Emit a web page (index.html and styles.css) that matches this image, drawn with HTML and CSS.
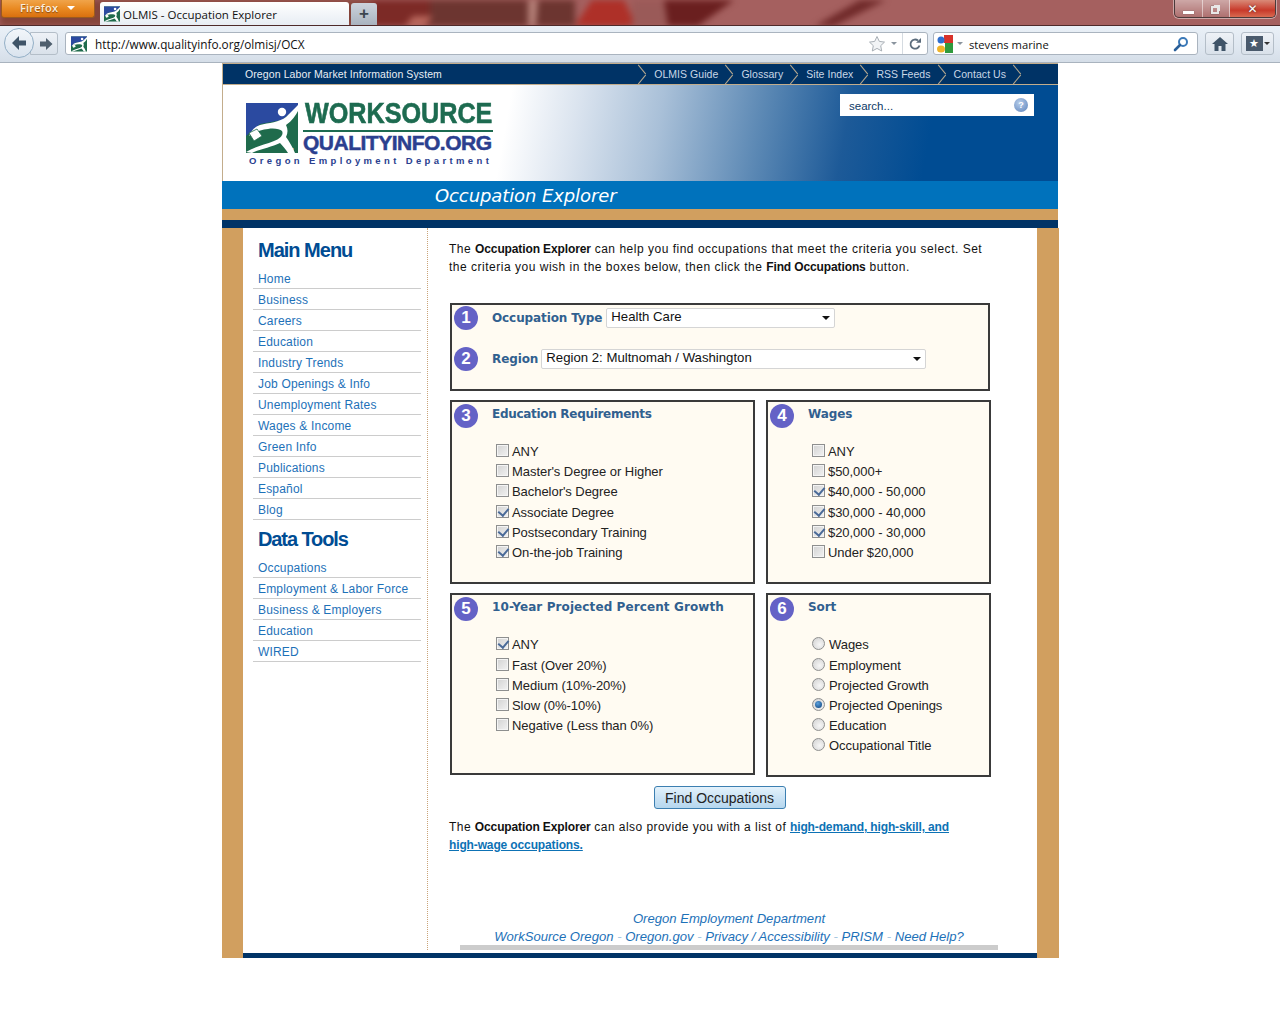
FILE: index.html
```html
<!DOCTYPE html>
<html lang="en">
<head>
<meta charset="utf-8">
<title>OLMIS - Occupation Explorer</title>
<link rel="stylesheet" href="styles.css">
</head>
<body>
<div class="chrome">
  <div class="titlebar">
    <svg class="titleart" viewBox="0 0 1280 26" preserveAspectRatio="none">
      <path d="M0 0h372v26H0z" fill="#84443a"/>
      <path d="M372 0h60v26h-60z" fill="#7c2a26"/>
      <path d="M430 0h145v26H430z" fill="#6c3530"/>
      <path d="M528 0h10l-2 26h-8z" fill="#b58078"/>
      <path d="M575 26 592 0h32l12 26z" fill="#ae3028"/>
      <path d="M632 0h50l-14 26h-36z" fill="#9a5a58"/>
      <path d="M664 0h70l-36 26h-30z" fill="#6a1f1f"/>
      <path d="M405 26l8-10h20l-8 10z" fill="#b8675c"/>
      <path d="M815 26l45-26h26l-52 26z" fill="#702a2a"/>
    </svg>
    <div class="ffbtn">Firefox <span class="ffcaret"></span></div>
    <div class="tab">
      <svg class="favicon" viewBox="0 0 52 50"><use href="#mark"/></svg>
      <span>OLMIS - Occupation Explorer</span>
    </div>
    <div class="newtab">+</div>
    <div class="winbtns">
      <div class="wb wbmin"><span class="minbar"></span></div>
      <div class="wb wbmax"><span class="maxbox"></span></div>
      <div class="wb wbclose">✕</div>
    </div>
  </div>
  <div class="toolbar">
    <div class="navbtns">
      <div class="back"><svg viewBox="0 0 18 18" width="18" height="18"><path d="M9 2 2 9l7 7v-4.500h7v-5H9z" fill="#3f5468"/></svg></div>
      <div class="fwd"><svg viewBox="0 0 14 14" width="14" height="14"><path d="M7 1 13.500 7 7 13V9.500H1v-5h6z" fill="#4f5f6e"/></svg></div>
    </div>
    <div class="urlbar">
      <svg class="favicon urlicon" viewBox="0 0 52 50"><use href="#mark"/></svg>
      <span class="urltext">http://www.qualityinfo.org/olmisj/OCX</span>
      <svg class="star" viewBox="0 0 18 18" width="18" height="18"><path d="M9 1.500l2.300 4.900 5.200.7-3.800 3.600 1 5.300L9 13.400 4.300 16l1-5.300-3.800-3.600 5.200-.7z" fill="#f2f4f6" stroke="#a9b0b6"/></svg>
      <span class="tinycaret"></span>
      <span class="urlsep"></span>
      <svg class="reload" viewBox="0 0 14 14" width="14" height="14"><path d="M11.500 8.500A4.600 4.600 0 1 1 10 3.500" fill="none" stroke="#5b6c7c" stroke-width="1.800"/><path d="M8 5.800h5V1z" fill="#5b6c7c"/></svg>
    </div>
    <div class="searchbar">
      <svg class="gicon" viewBox="0 0 16 18" width="16" height="18"><path d="M7 0h9v8H7z" fill="#d8322a"/><path d="M8 8h8v10H8z" fill="#2f9a3d"/><circle cx="4" cy="5" r="3.500" fill="#2f6fd0"/><ellipse cx="4" cy="14" rx="4" ry="3.500" fill="#f0b429"/></svg>
      <span class="tinycaret"></span>
      <span class="searchtext">stevens marine</span>
      <svg class="glass" viewBox="0 0 16 16" width="16" height="16"><circle cx="10" cy="6" r="4" fill="none" stroke="#3b79b8" stroke-width="2"/><path d="M7 9l-5 5" stroke="#2a5f99" stroke-width="2.600" stroke-linecap="round"/></svg>
    </div>
    <div class="toolbtn home"><svg viewBox="0 0 16 14" width="16" height="14"><path d="M8 0 0 7h2.500v7h4V9h3v5h4V7H16z" fill="#3f5468"/></svg></div>
    <div class="toolbtn marks"><span class="markbox">★</span><span class="tinycaret dark"></span></div>
  </div>
</div>

<svg class="defs" width="0" height="0" aria-hidden="true">
  <symbol id="mark" viewBox="0 0 52 50">
    <rect width="52" height="50" fill="#1f6b4c"/>
    <path d="M0 0H52V4L36 17 14 21 0 33Z" fill="#2b4aa0"/>
    <path d="M52 2 40 14C34 19 22 20 14 22 8 24 5 28 3 33 8 29 14 27 22 26 28 25 34 26 36 28 38 32 34 36 28 38 18 42 8 44 0 49L6 50C14 46 26 44 34 40 37 43 40 47 42 50H49C46 43 43 38 40 34 42 30 42 26 40 22 46 18 50 12 52 8Z" fill="#fff"/>
    <circle cx="36" cy="9" r="4.200" fill="#fff"/>
    <path d="M3 30 11 26 16 33 8 38Z" fill="#fff" stroke="#1f6b4c" stroke-width=".8"/>
  </symbol>
</svg>

<div class="page">
  <div class="topnav">
    <div class="sysname">Oregon Labor Market Information System</div>
    <nav class="toplinks">
      <span class="chev"></span><a>OLMIS Guide</a>
      <span class="chev"></span><a>Glossary</a>
      <span class="chev"></span><a>Site Index</a>
      <span class="chev"></span><a>RSS Feeds</a>
      <span class="chev"></span><a>Contact Us</a>
      <span class="chev"></span>
    </nav>
  </div>
  <div class="brand">
    <div class="logo">
      <svg class="logomark" viewBox="0 0 52 50"><use href="#mark"/><text x="41" y="49" class="tm">TM</text></svg>
      <div class="logotext">
        <div class="ws">WORKSOURCE</div>
        <div class="qi">QUALITYINFO.ORG</div>
      </div>
      <div class="oed">Oregon Employment Department</div>
    </div>
    <div class="sitesearch">
      <span>search...</span>
      <span class="helpdot">?</span>
    </div>
  </div>
  <div class="titleband"><span>Occupation Explorer</span></div>
  <div class="tanband"></div>
  <div class="navyband"></div>

  <div class="main">
    <aside class="side">
      <h2>Main Menu</h2>
      <ul class="menu">
        <li>Home</li><li>Business</li><li>Careers</li><li>Education</li><li>Industry Trends</li><li>Job Openings &amp; Info</li><li>Unemployment Rates</li><li>Wages &amp; Income</li><li>Green Info</li><li>Publications</li><li>Español</li><li>Blog</li>
      </ul>
      <h2 class="h2b">Data Tools</h2>
      <ul class="menu">
        <li>Occupations</li><li>Employment &amp; Labor Force</li><li>Business &amp; Employers</li><li>Education</li><li>WIRED</li>
      </ul>
    </aside>
    <section class="content">
      <p class="intro">The <b>Occupation Explorer</b> can help you find occupations that meet the criteria you select. Set<br>the criteria you wish in the boxes below, then click the <b>Find Occupations</b> button.</p>

      <div class="panel wide">
        <div class="selrow r1">
          <span class="num">1</span>
          <span class="head">Occupation Type</span>
          <span class="sel s1">Health Care<i></i></span>
        </div>
        <div class="selrow r2">
          <span class="num">2</span>
          <span class="head">Region</span>
          <span class="sel s2">Region 2: Multnomah / Washington<i></i></span>
        </div>
      </div>

      <div class="pgrid">
        <div class="panel p3">
          <div class="phead"><span class="num">3</span><span class="head">Education Requirements</span></div>
          <div class="opts">
            <div class="opt"><span class="cb"></span>ANY</div>
            <div class="opt"><span class="cb"></span>Master's Degree or Higher</div>
            <div class="opt"><span class="cb"></span>Bachelor's Degree</div>
            <div class="opt"><span class="cb on"></span>Associate Degree</div>
            <div class="opt"><span class="cb on"></span>Postsecondary Training</div>
            <div class="opt"><span class="cb on"></span>On-the-job Training</div>
          </div>
        </div>
        <div class="panel p4">
          <div class="phead"><span class="num">4</span><span class="head">Wages</span></div>
          <div class="opts">
            <div class="opt"><span class="cb"></span>ANY</div>
            <div class="opt"><span class="cb"></span>$50,000+</div>
            <div class="opt"><span class="cb on"></span>$40,000 - 50,000</div>
            <div class="opt"><span class="cb on"></span>$30,000 - 40,000</div>
            <div class="opt"><span class="cb on"></span>$20,000 - 30,000</div>
            <div class="opt"><span class="cb"></span>Under $20,000</div>
          </div>
        </div>
        <div class="panel p5">
          <div class="phead"><span class="num">5</span><span class="head">10-Year Projected Percent Growth</span></div>
          <div class="opts">
            <div class="opt"><span class="cb on"></span>ANY</div>
            <div class="opt"><span class="cb"></span>Fast (Over 20%)</div>
            <div class="opt"><span class="cb"></span>Medium (10%-20%)</div>
            <div class="opt"><span class="cb"></span>Slow (0%-10%)</div>
            <div class="opt"><span class="cb"></span>Negative (Less than 0%)</div>
          </div>
        </div>
        <div class="panel p6">
          <div class="phead"><span class="num">6</span><span class="head">Sort</span></div>
          <div class="opts">
            <div class="opt"><span class="rb"></span>Wages</div>
            <div class="opt"><span class="rb"></span>Employment</div>
            <div class="opt"><span class="rb"></span>Projected Growth</div>
            <div class="opt"><span class="rb on"></span>Projected Openings</div>
            <div class="opt"><span class="rb"></span>Education</div>
            <div class="opt"><span class="rb"></span>Occupational Title</div>
          </div>
        </div>
      </div>

      <div class="findrow"><button class="find" type="button">Find Occupations</button></div>
      <p class="outro">The <b>Occupation Explorer</b> can also provide you with a list of <a>high-demand, high-skill, and<br>high-wage occupations.</a></p>

      <footer class="foot">
        <div>Oregon Employment Department</div>
        <div>WorkSource Oregon <s>-</s> Oregon.gov <s>-</s> Privacy / Accessibility <s>-</s> PRISM <s>-</s> Need Help?</div>
        <div class="greybar"></div>
      </footer>
    </section>
  </div>
  <div class="bottombar"><div class="bottomnavy"></div></div>
</div>
</body>
</html>
```
FILE: styles.css
```css
* { box-sizing: border-box; }
html, body { margin: 0; padding: 0; background: #fff; }
body { font-family: "Liberation Sans", Arial, sans-serif; font-size: 12px; color: #111; height: 1024px; overflow: hidden; }
.defs { position: absolute; }
.tm { font: bold 4.500px "Liberation Sans", sans-serif; fill: #fff; }

.chrome { height: 63px; }
.titlebar { position: relative; height: 26px; background: #a5605f; border-bottom: 1px solid #4e2a2a; display: flex; align-items: flex-start; overflow: hidden; }
.titleart { position: absolute; left: 0; top: 0; width: 100%; height: 26px; filter: blur(3px); }
.ffbtn { position: relative; width: 94px; height: 18px; margin-left: 1px; background: linear-gradient(#f0a44a, #e98a22 50%, #d9700f); border: 1px solid #9a5a20; border-top: 0; border-radius: 0 0 3px 3px; color: #fbeede; font: 600 11px/16px "Open Sans", sans-serif; text-align: left; text-shadow: 0 1px 1px #8a4a10; padding-left: 18px; letter-spacing: .2px; }
.ffcaret { position: absolute; left: 65px; top: 6px; border: 4px solid transparent; border-top: 4px solid #fff; border-bottom: 0; }
.tab { position: relative; width: 249px; height: 24px; margin: 2px 0 0 5px; background: linear-gradient(#fff, #e6ecf3); border-radius: 3px 3px 0 0; display: flex; align-items: center; padding-left: 4px; gap: 3px; font: 11.500px "Open Sans", sans-serif; color: #111; }
.favicon { width: 16px; height: 16px; flex: none; }
.newtab { position: relative; width: 26px; height: 22px; margin: 3px 0 0 2px; background: linear-gradient(#ccd3dc, #a9b3bf); border-radius: 3px 3px 0 0; color: #3c4650; font: bold 17px/22px "Liberation Sans", sans-serif; text-align: center; }
.winbtns { position: absolute; right: 4px; top: 0; width: 102px; height: 18px; display: flex; border: 1px solid #4a3a3a; border-top: 0; border-radius: 0 0 5px 5px; overflow: hidden; box-shadow: 0 0 0 1px rgba(255,255,255,.45); }
.wb { display: flex; align-items: center; justify-content: center; height: 100%; background: linear-gradient(rgba(255,255,255,.45), rgba(255,255,255,.1)); border-right: 1px solid rgba(255,255,255,.5); }
.wbmin { width: 28px; }
.wbmax { width: 27px; }
.wbclose { flex: 1; border: 0; background: linear-gradient(#d98a78, #c8392a 60%, #d96a50); color: #fff; font: bold 12px/1 "DejaVu Sans", sans-serif; text-shadow: 0 0 2px #333; }
.minbar { width: 11px; height: 3px; background: #fff; margin-top: 7px; box-shadow: 0 0 1px #333; }
.maxbox { width: 8px; height: 8px; border: 2px solid #e8e8e8; box-shadow: 2px -2px 0 -1px #e8e8e8, 0 0 1px #333; margin: 2px 2px 0 0; }

.toolbar { height: 37px; background: linear-gradient(#eaf0f7, #dfe7f0 60%, #d5dee8); border-bottom: 1px solid #a9b3be; display: flex; align-items: flex-start; position: relative; }
.navbtns { width: 65px; height: 36px; position: relative; flex: none; }
.back { position: absolute; left: 4px; top: 2px; width: 30px; height: 30px; border-radius: 50%; background: linear-gradient(#f2f6fa, #d9e3ee); border: 1px solid #93afc6; display: flex; align-items: center; justify-content: center; z-index: 1; }
.fwd { position: absolute; left: 30px; top: 6px; width: 28px; height: 23px; background: linear-gradient(#eef2f7, #d9e1ea); border: 1px solid #b4bec8; border-radius: 0 3px 3px 0; display: flex; align-items: center; justify-content: center; padding-left: 4px; }
.urlbar { width: 863px; height: 23px; margin-top: 6px; background: #fff; border: 1px solid #aab4bf; border-radius: 3px; display: flex; align-items: center; padding-left: 5px; flex: none; }
.urlicon { margin-right: 8px; }
.urltext { font: 11.800px/15px "Open Sans", sans-serif; color: #111; flex: 1; padding-top: 2px; }
.star { margin-right: 5px; }
.tinycaret { width: 0; height: 0; border: 3px solid transparent; border-top: 3px solid #8a949e; border-bottom: 0; }
.tinycaret.dark { border-top-color: #333; }
.urlsep { width: 1px; height: 21px; background: #d5dbe1; margin: 0 5px 0 5px; }
.reload { margin-right: 5px; }
.searchbar { width: 265px; height: 23px; margin: 6px 0 0 5px; background: #fff; border: 1px solid #aab4bf; border-radius: 3px; display: flex; align-items: center; padding-left: 3px; flex: none; }
.searchbar .tinycaret { margin-left: 4px; }
.searchtext { font: 11.200px/15px "Open Sans", sans-serif; margin-left: 6px; flex: 1; padding-top: 2px; }
.glass { margin-right: 8px; }
.toolbtn { height: 23px; margin-top: 6px; background: linear-gradient(#eef2f7, #d9e1ea); border: 1px solid #b4bec8; border-radius: 3px; display: flex; align-items: center; justify-content: center; flex: none; }
.home { width: 29px; margin-left: 7px; }
.marks { width: 33px; margin-left: 7px; gap: 1px; }
.markbox { width: 17px; height: 15px; background: #4a5a6c; color: #fff; font: 11px/15px "DejaVu Sans", sans-serif; text-align: center; }

.page { width: 837px; margin-left: 222px; }
.topnav { height: 22px; background: #003366; border-top: 1px solid #c3ad8c; border-bottom: 1px solid #c3ad8c; border-left: 1px solid #c3ad8c; display: flex; justify-content: space-between; align-items: center; color: #e8eef5; width: 836px; }
.sysname { padding-left: 22px; font-size: 10.500px; letter-spacing: .1px; }
.toplinks { display: flex; align-items: center; height: 100%; margin-right: 37px; font-size: 10.500px; color: #c9d7e6; letter-spacing: .05px; }
.toplinks a { padding: 0 7px 0 8px; }
.chev { width: 8px; height: 20px; position: relative; display: block; }
.chev::before, .chev::after { content: ""; position: absolute; left: -2px; width: 12px; height: 1px; background: #b5a88f; }
.chev::before { top: 5px; transform: rotate(51deg); }
.chev::after { top: 15px; transform: rotate(-51deg); }

.brand { position: relative; height: 96px; width: 836px; border-left: 1px solid #c3ad8c; background: linear-gradient(100deg, #fff 0, #fff 34%, #dbe4ef 42%, #a9c0d8 52%, #5b88b4 64%, #1d5a98 74%, #004c93 84%, #004c93 100%); }
.logo { position: absolute; left: 23px; top: 18px; width: 250px; height: 66px; }
.logomark { position: absolute; left: 0; top: 0; width: 52px; height: 50px; }
.logotext { position: absolute; left: 57px; top: -5px; width: 192px; }
.ws { font: bold 29px/31px "Liberation Sans", sans-serif; color: #1d6b50; -webkit-text-stroke: .6px #1d6b50; margin-left: 2px; letter-spacing: 0; transform: scaleX(.868); transform-origin: left; white-space: nowrap; height: 31px; }
.qi { margin-top: 1px; border-top: 2px solid #1d6b50; font: bold 21px/21px "Liberation Sans", sans-serif; -webkit-text-stroke: .5px #2b3f8f; color: #2b3f8f; white-space: nowrap; width: 190px; letter-spacing: -.5px; }
.oed { position: absolute; left: 3px; top: 52px; font: bold 9.500px/12px "Liberation Sans", sans-serif; color: #2b3f8f; letter-spacing: 3.370px; white-space: nowrap; }
.sitesearch { position: absolute; left: 617px; top: 9px; width: 194px; height: 22px; background: #fff; display: flex; align-items: center; justify-content: space-between; padding: 2px 6px 0 9px; font-size: 11.500px; color: #0c3a66; }
.helpdot { width: 14px; height: 14px; border-radius: 50%; background: radial-gradient(circle at 40% 35%, #b7cdea, #5b82bb); color: #fff; font: bold 9px/14px "Liberation Sans", sans-serif; text-align: center; margin-top: -3px; }

.titleband { height: 28px; width: 836px; background: #0072bc; color: #fff; font: italic 18px/29px "DejaVu Sans", sans-serif; padding-left: 213px; }
.titleband span { letter-spacing: -.1px; }
.tanband { height: 11px; width: 836px; background: #d19f5f; }
.navyband { height: 8px; width: 836px; background: #003366; }

.main { display: flex; width: 837px; height: 730px; background: #fff; border-left: 21px solid #d19f5f; border-right: 22px solid #d19f5f; }
.side { width: 184px; margin-left: 1px; padding: 11px 6px 0 9px; border-right: 1px dotted #c9a47a; margin-bottom: 8px; flex: none; }
.side h2 { margin: 0 0 0 5px; font: bold 20px/22px "Liberation Sans", sans-serif; color: #004c93; letter-spacing: -1px; }
.side .h2b { padding-top: 8px; height: 30px; letter-spacing: -1.100px; }
.menu { list-style: none; margin: 7px 0 0; padding: 0; }
.menu li { height: 21px; border-bottom: 1px solid #ccc; color: #1d71b8; padding: 4px 0 0 5px; font-size: 12px; line-height: 15px; letter-spacing: .18px; }

.content { width: 608px; padding: 12px 0 0 21px; position: relative; }
.intro, .outro { margin: 0; font-size: 12px; line-height: 18px; width: 540px; letter-spacing: .51px; }
.intro b, .outro b { letter-spacing: -.12px; }
.intro { height: 63px; }
.panel { background: #fffbf2; border: 2px solid #3a3a3a; position: relative; }
.wide { width: 540px; height: 88px; margin-left: 1px; }
.selrow { display: flex; align-items: center; height: 24px; position: absolute; left: 2px; }
.r1 { top: 1px; }
.r2 { top: 42px; }
.num { width: 24px; height: 24px; border-radius: 50%; background: #6462c6; color: #fff; font: bold 17px/24px "Liberation Sans", sans-serif; text-align: center; flex: none; }
.head { font: bold 12px/18px "DejaVu Sans", sans-serif; color: #31608f; margin-left: 14px; white-space: nowrap; letter-spacing: -.1px; }
.p3 .head { letter-spacing: -.3px; }
.p5 .head { letter-spacing: .1px; }
.sel { position: relative; display: block; height: 20px; background: #fff; border: 1px solid #d5d5d5; border-radius: 2px; font-size: 13.200px; line-height: 16px; padding-left: 4px; color: #111; margin-left: 4px; }
.sel i { position: absolute; right: 4px; top: 7px; border: 4px solid transparent; border-top: 4px solid #111; border-bottom: 0; }
.s1 { width: 229px; }
.s2 { width: 385px; margin-left: 3px; }

.pgrid { display: grid; grid-template-columns: 305px 225px; column-gap: 11px; row-gap: 9px; margin: 9px 0 0 1px; align-items: start; }
.p3, .p4, .p6 { height: 184px; }
.p5 { height: 182px; }
.phead { display: flex; align-items: flex-start; padding: 2px 0 0 2px; height: 24px; }
.phead .head { line-height: 20px; }
.opts { padding: 15.400px 0 0 44px; }
.p5 .opts, .p6 .opts { padding-top: 15.800px; }
.opt { display: flex; align-items: center; height: 20.200px; font-size: 13px; letter-spacing: -.05px; color: #222; white-space: nowrap; }
.cb { width: 13px; height: 13px; margin-right: 3px; border: 1px solid #8e8f8f; background: linear-gradient(135deg, #d2d2d2, #f2f2f2); box-shadow: inset 0 0 0 1px #f4f4f4; position: relative; top: -1px; flex: none; }
.cb.on::after { content: ""; position: absolute; left: 3px; top: 0; width: 5px; height: 8px; border: solid #4a6a98; border-width: 0 2px 2px 0; transform: rotate(40deg); }
.rb { width: 13px; height: 13px; margin-right: 4px; border-radius: 50%; border: 1px solid #8e8f8f; background: radial-gradient(circle at 60% 60%, #f6f6f6, #cfcfcf); position: relative; top: -1px; flex: none; }
.rb.on::after { content: ""; position: absolute; left: 2px; top: 2px; width: 7px; height: 7px; border-radius: 50%; background: radial-gradient(circle at 40% 35%, #5aa0dc, #0b3f7a); }

.findrow { width: 541px; display: flex; justify-content: center; margin-top: 9px; }
.find { width: 132px; height: 23px; background: linear-gradient(#e4f2fb, #cbe3f5 50%, #b6d7ee); border: 1px solid #3c7fb1; border-radius: 3px; font: 14px/1 "Liberation Sans", sans-serif; color: #222; padding: 0; }
.outro { margin-top: 9px; letter-spacing: .45px; }
.outro a { color: #0d72b5; font-weight: bold; text-decoration: underline; letter-spacing: -.13px; }
.foot { position: absolute; left: 26px; top: 682px; width: 550px; text-align: center; font: italic 13.100px/18px "Liberation Sans", sans-serif; color: #1d71b8; }
.foot s { text-decoration: none; color: #a8c8e0; }
.greybar { height: 5px; background: #ccc; width: 538px; margin: -1px 0 0 6px; }

.bottombar { width: 837px; height: 5px; background: #d19f5f; margin-top: -5px; position: relative; padding: 0 22px 0 21px; }
.bottomnavy { height: 5px; background: #003366; }
```
